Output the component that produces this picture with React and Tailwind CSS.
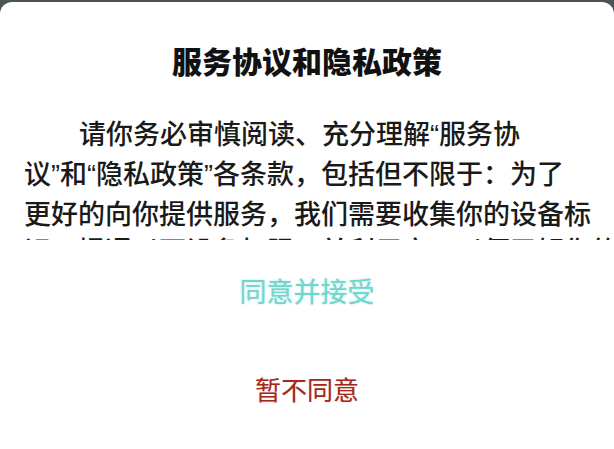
import React from 'react';

const lines = [
  { text: ['请你务必审慎阅读、充分理解', '“', '服务协'], indent: true },
  { text: ['议', '”', '和', '“', '隐私政策', '”', '各条款，包括但不限于：为了'] },
  { text: ['更好的向你提供服务，我们需要收集你的设备标'] },
  { text: ['识，提通以下设备权限，并利用它，以便了解你的'] },
];

const isQuote = (s) => s === '“' || s === '”';

export default function App() {
  return (
    <div
      className="w-[614px] h-[449px] overflow-hidden bg-[#4b5354] pt-[2px]"
      style={{ fontFamily: '"Noto Sans CJK SC", "Noto Sans", sans-serif' }}
    >
      <div className="h-full bg-white rounded-t-[12px] flex flex-col">
        {/* title */}
        <div className="mt-[38px] h-[40px] leading-[40px] text-center text-[30px] font-black text-[#111]">
          服务协议和隐私政策
        </div>

        {/* body, clipped like a scroll area */}
        <div className="mt-[34px] h-[126px] overflow-hidden px-[24px] text-[27px] leading-[37px] font-medium text-[#1a1a1a]">
          {lines.map((l, i) => (
            <div key={i} className={`whitespace-nowrap ${l.indent ? 'pl-[55px]' : ''}`}>
              {l.text.map((t, j) =>
                isQuote(t) ? (
                  <span key={j} style={{ fontFamily: '"Liberation Sans", sans-serif' }}>{t}</span>
                ) : (
                  <span key={j}>{t}</span>
                )
              )}
            </div>
          ))}
        </div>

        {/* actions */}
        <button className="mt-[26px] h-[50px] text-[27px] text-[#74d5cf] [text-shadow:0_0_2px_rgba(111,211,205,0.7)]">
          同意并接受
        </button>
        <button className="mt-[47px] h-[50px] text-[26px] text-[#a3281d] [text-shadow:0_0_1px_rgba(220,120,100,0.5)]">
          暂不同意
        </button>
      </div>
    </div>
  );
}
